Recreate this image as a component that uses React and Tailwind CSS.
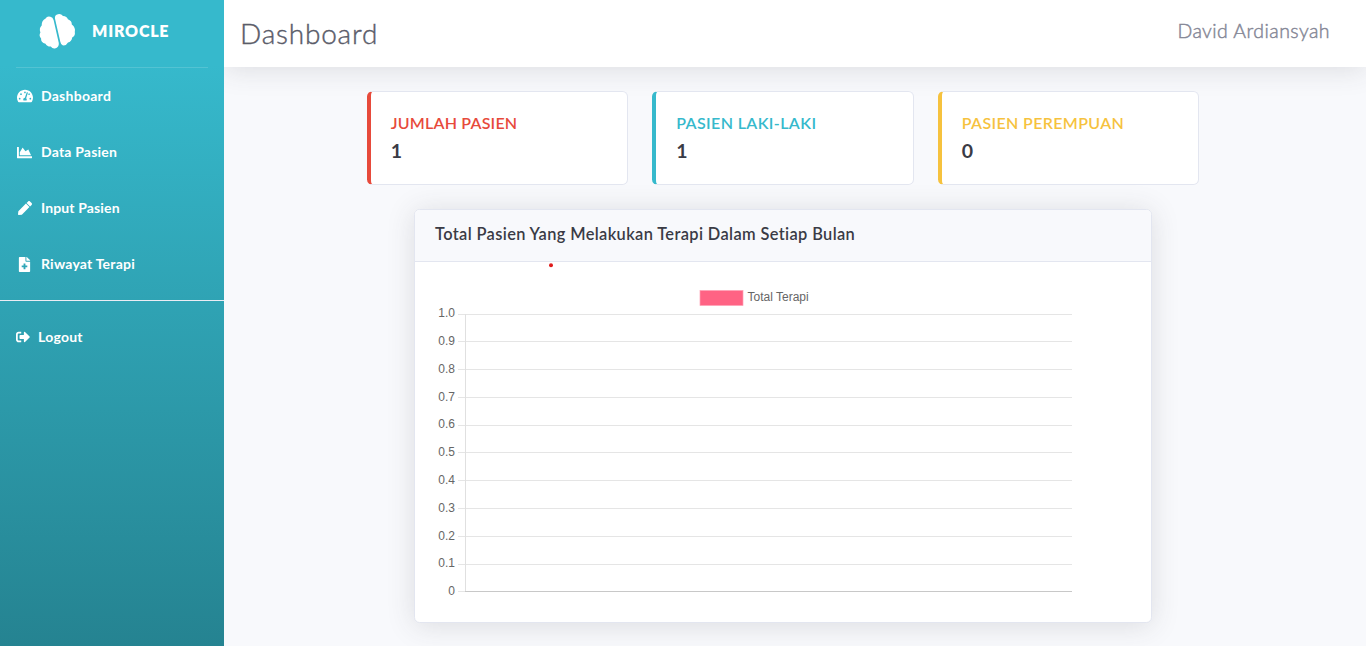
import { FaTachometerAlt, FaChartArea, FaPen, FaFileMedical, FaSignOutAlt } from "react-icons/fa";

const shadow = "shadow-[0_2.4px_28px_0_rgba(58,59,69,0.15)]";

const navItems = [
  { label: "Dashboard", icon: FaTachometerAlt, size: 16, spacing: "tracking-[0.27px]" },
  { label: "Data Pasien", icon: FaChartArea, size: 15, spacing: "tracking-[0.2px]" },
  { label: "Input Pasien", icon: FaPen, size: 14, spacing: "tracking-[0.14px]" },
  { label: "Riwayat Terapi", icon: FaFileMedical, size: 15, spacing: "tracking-[0.22px]" },
];

const stats = [
  { label: "JUMLAH PASIEN", value: "1", border: "border-l-[#e74a3b]", text: "text-[#e74a3b] tracking-[0.2px]" },
  { label: "PASIEN LAKI-LAKI", value: "1", border: "border-l-[#36b9cc]", text: "text-[#36b9cc] tracking-[0.38px]" },
  { label: "PASIEN PEREMPUAN", value: "0", border: "border-l-[#f6c23e]", text: "text-[#f6c23e] tracking-[0.36px]" },
];

// label, grid line position, text baseline
const ticks = [
  ["1.0", 314, 317], ["0.9", 341, 345], ["0.8", 369, 373], ["0.7", 397, 401],
  ["0.6", 425, 428], ["0.5", 452, 456], ["0.4", 480, 484], ["0.3", 508, 512],
  ["0.2", 536, 540], ["0.1", 564, 567], ["0", 591, 595],
];

function Brain() {
  return (
    <svg width="38" height="38" viewBox="0 0 38 38" fill="white" className="shrink-0">
      <path d="M7.6 6.4 Q9 4 12.4 4.8 Q14.8 5.2 15.6 8 L20.8 31 Q21.2 35.5 17 36.4 Q14.5 36.9 12.8 34.6 Q9 34.8 7.5 31.8 Q2.6 30.4 3.1 26.4 Q0.5 23.7 2.4 20.4 Q0.8 16 3.7 13.4 Q3.5 8.4 7.6 6.4Z" />
      <path d="M16.9 6.3 Q16.7 2.8 20 2.2 Q23 1.5 25 4 Q29 4.2 29.9 7.3 Q34 8.8 33.8 12.5 Q37.8 15.5 36.8 20 Q37.6 23.7 34.2 25.4 Q33.6 29.6 30 30.4 Q28.1 34 24.6 33.3 Q22.9 32.8 22.3 29.8Z" />
    </svg>
  );
}

function Sidebar() {
  return (
    <aside className="flex w-[224px] shrink-0 flex-col bg-linear-[180deg,#36b9cc_10%,#258391_100%] text-white">
      <div className="flex h-[67px] items-start pt-3 pl-[38px]">
        <Brain />
        <span className="mt-[7px] ml-4 text-[16px] leading-6 font-extrabold tracking-[0.8px]">MIROCLE</span>
      </div>
      <div className="mx-4 h-px bg-white/15" />
      <nav className="flex flex-col">
        {navItems.map(({ label, icon: Icon, size, spacing }) => (
          <a key={label} className="flex h-14 items-center pl-4 text-[14px] font-bold">
            <span className="flex w-[17.5px] justify-center"><Icon size={size} /></span>
            <span className={`mb-px ml-[7.5px] ${spacing}`}>{label}</span>
          </a>
        ))}
      </nav>
      <div className="mt-2 h-px bg-[#eaecf4]" />
      <a className="mt-2 flex h-14 items-center pl-4 text-[14px] font-bold">
        <FaSignOutAlt size={14} />
        <span className="mb-[2px] ml-2 tracking-[0.25px]">Logout</span>
      </a>
    </aside>
  );
}

function Chart() {
  return (
    <svg width="736" height="360" viewBox="415 262 736 360" className="block font-['Liberation_Sans',sans-serif]" fontSize="12" fill="#666">
      <circle cx="551" cy="265.2" r="2" fill="#e01b1b" />
      <rect x="700" y="290.5" width="43" height="15" fill="#ff6384" />
      <rect x="700" y="290.5" width="43" height="15" fill="none" stroke="#ffa1b5" strokeWidth="0.7" />
      <text x="747.5" y="301">Total Terapi</text>
      {ticks.map(([label, y, baseline]) => (
        <g key={label}>
          <text x="455" y={baseline} textAnchor="end">{label}</text>
          <rect x="458" y={y} width="614" height="1" fill="#e5e5e5" />
        </g>
      ))}
      <rect x="465" y="314" width="1" height="278" fill="#e0e0e0" />
      <rect x="465" y="591" width="607" height="1" fill="#c8c8c8" />
    </svg>
  );
}

export default function App() {
  return (
    <div className="flex h-[646px] w-[1366px] overflow-hidden bg-[#f8f9fc] font-['Lato',sans-serif]">
      <Sidebar />
      <div className="flex min-w-0 flex-1 flex-col overflow-hidden">
        <header className={`flex h-[67px] shrink-0 items-start justify-between bg-white pr-9 pl-4 ${shadow}`}>
          <h1 className="mt-4 text-[28px] leading-[34px] font-light tracking-[0.8px] text-[#5a5c69] [-webkit-text-stroke:0.4px_#5a5c69]">Dashboard</h1>
          <span className="mt-4 text-[19.5px] leading-[29px] font-light tracking-[0.44px] text-[#858796] [-webkit-text-stroke:0.45px_#858796]">David Ardiansyah</span>
        </header>
        <main className="flex flex-col items-center pt-6 pr-6">
          <div className="flex w-[832.5px] gap-6">
            {stats.map((s) => (
              <div key={s.label} className={`h-[94px] flex-1 rounded-[5.6px] border border-l-4 border-[#e3e6f0] bg-white pt-[19px] pl-5 ${s.border}`}>
                <div className={`text-[16px] leading-6 font-semibold ${s.text}`}>{s.label}</div>
                <div className="mt-1 text-[19.5px] leading-[23px] font-bold text-[#3a3b45]">{s.value}</div>
              </div>
            ))}
          </div>
          <section className={`mt-6 h-[414px] w-[738px] overflow-hidden rounded-[5.6px] border border-[#e3e6f0] bg-white ${shadow}`}>
            <div className="flex h-[52px] items-center border-b border-[#e3e6f0] bg-[#f8f9fc] pb-[3px] pl-5 text-[16.4px] font-semibold tracking-[0.37px] text-[#3a3b45]">
              Total Pasien Yang Melakukan Terapi Dalam Setiap Bulan
            </div>
            <Chart />
          </section>
        </main>
      </div>
    </div>
  );
}
